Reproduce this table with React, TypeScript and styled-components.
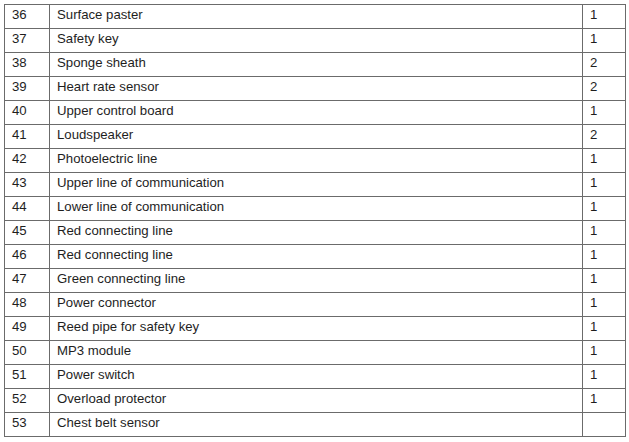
import styled, { createGlobalStyle } from "styled-components";

const rows: [number, string, string][] = [
  [36, "Surface paster", "1"],
  [37, "Safety key", "1"],
  [38, "Sponge sheath", "2"],
  [39, "Heart rate sensor", "2"],
  [40, "Upper control board", "1"],
  [41, "Loudspeaker", "2"],
  [42, "Photoelectric line", "1"],
  [43, "Upper line of communication", "1"],
  [44, "Lower line of communication", "1"],
  [45, "Red connecting line", "1"],
  [46, "Red connecting line", "1"],
  [47, "Green connecting line", "1"],
  [48, "Power connector", "1"],
  [49, "Reed pipe for safety key", "1"],
  [50, "MP3 module", "1"],
  [51, "Power switch", "1"],
  [52, "Overload protector", "1"],
  [53, "Chest belt sensor", ""],
];

const GlobalStyle = createGlobalStyle`
  body {
    margin: 0;
    background: #fff;
    font-family: "Liberation Sans", Arial, sans-serif;
  }
`;

const Page = styled.div`
  padding: 4px 0 0 4px;
`;

const Table = styled.table`
  border-collapse: collapse;
  table-layout: fixed;
  width: 621px;
  font-size: 13.2px;
  color: #1e1e1e;
`;

const Cell = styled.td<{ $w: number }>`
  width: ${p => p.$w}px;
  height: 24px;
  box-sizing: border-box;
  border: 1px solid #6b6b6b;
  padding: 2px 0 0 7px;
  vertical-align: top;
  line-height: 15px;
`;

export default function App() {
  return (
    <>
      <GlobalStyle />
      <Page>
        <Table>
          <tbody>
            {rows.map(([no, name, qty]) => (
              <tr key={no}>
                <Cell $w={45}>{no}</Cell>
                <Cell $w={533}>{name}</Cell>
                <Cell $w={43}>{qty}</Cell>
              </tr>
            ))}
          </tbody>
        </Table>
      </Page>
    </>
  );
}
